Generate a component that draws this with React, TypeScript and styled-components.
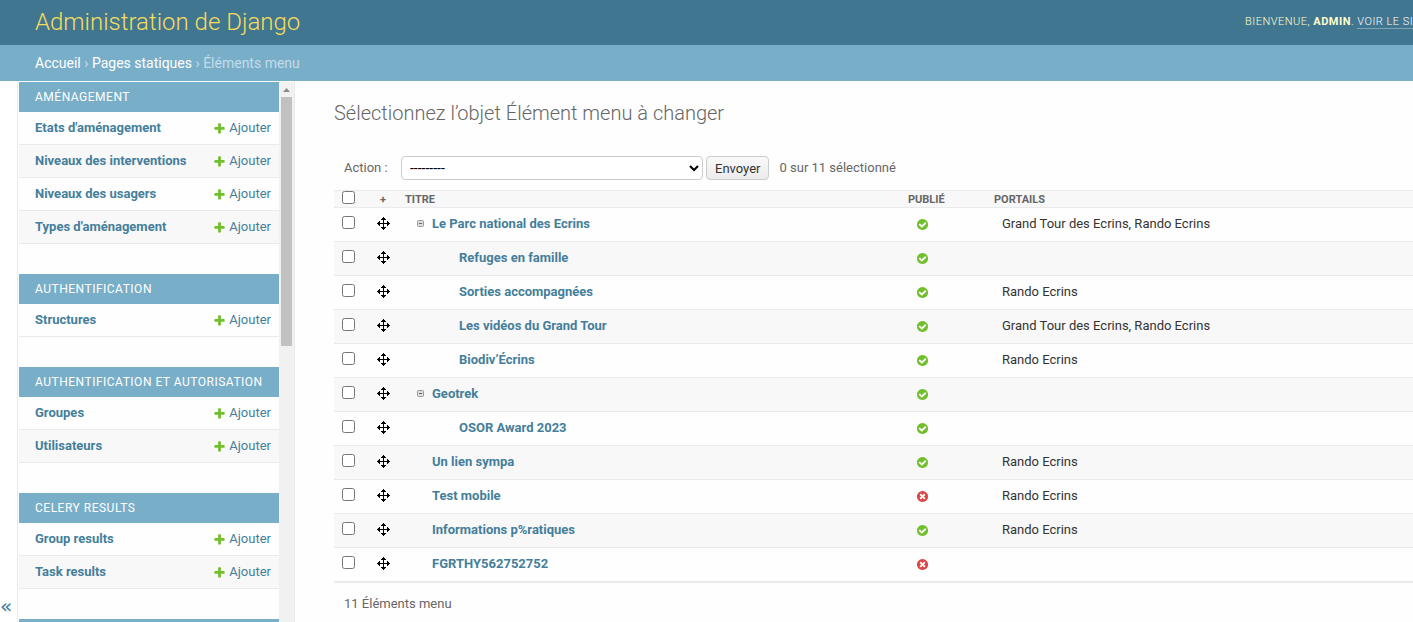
import React from 'react';
import styled, { createGlobalStyle } from 'styled-components';

const GlobalStyle = createGlobalStyle`
  * { box-sizing: border-box; }
  body {
    margin: 0;
    background: #fefefe;
    color: #333;
    font-family: Roboto, "Liberation Sans", sans-serif;
    font-size: 14px;
  }
  a { color: #447e9b; text-decoration: none; }
`;

const Page = styled.div`
  display: flex;
  flex-direction: column;
  height: 100vh;
  overflow: hidden;
`;

const Header = styled.header`
  flex: none;
  display: flex;
  align-items: center;
  height: 45px;
  padding: 0 0 2px 35px;
  background: #417690;
  color: #ffc;
  overflow: hidden;
`;

const SiteName = styled.a`
  flex: 1;
  && { color: #f5dd5d; }
  font-size: 24px;
  font-weight: 300;
  line-height: 28px;
`;

const UserTools = styled.div`
  width: 168px;
  flex: none;
  overflow: hidden;
  white-space: nowrap;
  font-size: 11px;
  font-weight: 300;
  line-height: 16px;
  letter-spacing: 0.045em;
  text-transform: uppercase;
  strong { font-weight: 700; }
  a { color: #fff; border-bottom: 1px solid #7fa3b4; }
`;

const Breadcrumbs = styled.nav`
  flex: none;
  padding: 10px 35px;
  background: #79aec8;
  color: #c4dce8;
  line-height: 16px;
  a { color: #fff; }
`;

const Body = styled.div`
  flex: 1;
  min-height: 0;
  display: flex;
`;

const Toggle = styled.button`
  flex: none;
  align-self: stretch;
  display: flex;
  align-items: flex-end;
  width: 18px;
  padding: 0 0 4px;
  border: 0;
  border-right: 1px solid #eaeaea;
  background: #fff;
  color: #447e9b;
  font-family: "DejaVu Sans", sans-serif;
  font-size: 20px;
  line-height: 24px;
`;

const Sidebar = styled.nav`
  flex: none;
  display: flex;
  width: 277px;
  padding: 1px 0 0 1px;
  border-right: 1px solid #eaeaea;
  overflow: hidden;
`;

const AppList = styled.div`
  width: 260px;
`;

const AppTable = styled.table`
  width: 100%;
  margin-bottom: 30px;
  border-collapse: separate;
  border-spacing: 0;
  font-size: 13px;
  caption {
    height: 30px;
    padding: 0 16px;
    background: #79aec8;
    font-size: 12px;
    line-height: 30px;
    letter-spacing: 0.042em;
    text-align: left;
    text-transform: uppercase;
    white-space: nowrap;
  }
  caption a { color: #fff; }
  tr:nth-child(even) { background: #f8f8f8; }
  th, td {
    height: 33px;
    padding: 0 8px 0 16px;
    border-bottom: 1px solid #eaeaea;
    line-height: 16px;
    text-align: left;
  }
`;

const AddLink = styled.a`
  display: flex;
  align-items: center;
  justify-content: flex-end;
  gap: 3px;
`;

const ScrollTrack = styled.div`
  display: flex;
  flex-direction: column;
  align-items: center;
  width: 15px;
  background: #f1f1f1;
  svg { flex: none; margin: 6px 0 5px; }
`;

const ScrollThumb = styled.div`
  width: 11px;
  height: 249px;
  background: #c1c1c1;
`;

const Main = styled.main`
  flex: 1;
  min-width: 0;
  padding: 20px 0 0 39px;
`;

const Title = styled.h1`
  margin: 0;
  color: #666;
  font-size: 20px;
  font-weight: 300;
  line-height: 24px;
`;

const Actions = styled.form`
  display: flex;
  align-items: center;
  margin-top: 31px;
  padding-left: 10px;
  color: #666;
  font-size: 13px;
  line-height: 24px;
  label { width: 57px; }
`;

const Select = styled.select`
  width: 302px;
  height: 24px;
  padding: 0 4px;
  border: 1px solid #ccc;
  border-radius: 4px;
  background: #fff;
  color: #000;
  font-family: inherit;
  font-size: 14px;
`;

const Submit = styled.button`
  height: 24px;
  margin: 0 10px 0 3px;
  padding: 0 8px;
  border: 1px solid #ccc;
  border-radius: 4px;
  background: linear-gradient(#f9f9f9, #ececec);
  color: #333;
  font-family: inherit;
  font-size: 13px;
`;

const ResultTable = styled.table`
  width: 100%;
  margin-top: 10px;
  table-layout: fixed;
  border-collapse: separate;
  border-spacing: 0;
  border-bottom: 1px solid #eaeaea;
  font-size: 13px;
  th, td { height: 34px; padding: 0 8px; border-bottom: 1px solid #eaeaea; text-align: left; }
  tbody tr:nth-child(even) { background: #f8f8f8; }
  thead th {
    height: 18px;
    padding-top: 1px;
    border-top: 1px solid #eaeaea;
    background: #f8f8f8;
    color: #666;
    font-size: 11px;
    line-height: 15px;
    text-transform: uppercase;
  }
  thead th:first-child { padding-top: 0; }
  thead th:nth-child(2) { padding: 1px 0 0; text-align: center; }
  input { display: block; width: 13px; height: 13px; margin: 0 0 4px; }
  thead input { margin: 0 0 3px; }
  svg { display: block; }
`;

const Col = styled.col<{ $width?: number }>`
  width: ${(p) => (p.$width ? `${p.$width}px` : 'auto')};
`;

const MoveHandle = styled.span`
  display: block;
  padding-bottom: 2px;
  cursor: move;
`;

const Node = styled.div<{ $level: number }>`
  display: flex;
  align-items: center;
  gap: 7px;
  padding: 0 0 2px ${(p) => (p.$level ? 54 : 27)}px;
  &:has(button) { padding-left: 12px; }
`;

const Collapse = styled.button`
  width: 8px;
  height: 8px;
  padding: 0;
  border: 0;
  background: none;
`;

const Indented = styled.div`
  padding: 0 0 2px 8px;
`;

const Status = styled.div`
  padding-left: 8px;
`;

const Paginator = styled.p`
  margin: 0;
  padding: 12px 10px;
  color: #666;
  font-size: 13px;
  line-height: 18px;
`;

const RING =
  'q0 209-103 385.5t-279.5 279.5-385.5 103-385.5-103-279.5-279.5-103-385.5 103-385.5 279.5-279.5 385.5-103 385.5 103 279.5 279.5 103 385.5z';

const PlusIcon = () => (
  <svg width="13" height="13" viewBox="0 0 1792 1792" aria-hidden="true">
    <path fill="#70bf2b" d="M1600 796v192q0 40-28 68t-68 28h-416v416q0 40-28 68t-68 28h-192q-40 0-68-28t-28-68v-416h-416q-40 0-68-28t-28-68v-192q0-40 28-68t68-28h416v-416q0-40 28-68t68-28h192q40 0 68 28t28 68v416h416q40 0 68 28t28 68z" />
  </svg>
);

const YesIcon = () => (
  <svg width="13" height="13" viewBox="0 0 1792 1792" role="img" aria-label="True">
    <path fill="#70bf2b" d={`M1412 734q0-28-18-46l-91-90q-19-19-45-19t-45 19l-408 407-226-226q-19-19-45-19t-45 19l-91 90q-18 18-18 46 0 27 18 45l362 362q19 19 45 19 27 0 46-19l543-543q18-18 18-45zm252 162${RING}`} />
  </svg>
);

const NoIcon = () => (
  <svg width="13" height="13" viewBox="0 0 1792 1792" role="img" aria-label="False">
    <path fill="#dd4646" d={`M1277 1122q0-26-19-45l-181-181 181-181q19-19 19-45 0-27-19-46l-90-90q-19-19-46-19-26 0-45 19l-181 181-181-181q-19-19-45-19-27 0-46 19l-90 90q-19 19-19 46 0 26 19 45l181 181-181 181q-19 19-19 45 0 27 19 46l90 90q19 19 46 19 26 0 45-19l181-181 181 181q19 19 45 19 27 0 46-19l90-90q19-19 19-46zm387-226${RING}`} />
  </svg>
);

const MoveIcon = () => (
  <svg width="13" height="13" viewBox="0 0 13 13" shapeRendering="crispEdges" aria-hidden="true">
    <path d="M6 0h1v13h-1zM0 6h13v1h-13zM5 1h3v1h-3zM4 2h5v1h-5zM5 11h3v1h-3zM4 10h5v1h-5zM1 5h1v3h-1zM2 4h1v5h-1zM11 5h1v3h-1zM10 4h1v5h-1z" />
  </svg>
);

const CollapseIcon = () => (
  <svg width="8" height="8" viewBox="0 0 8 8" aria-hidden="true">
    <rect x="0.5" y="0.5" width="6" height="6" rx="1" fill="#ddd" stroke="#999" />
    <path d="M2 3.5h3" stroke="#666" />
  </svg>
);

const apps = [
  { name: 'Aménagement', models: ["Etats d'aménagement", 'Niveaux des interventions', 'Niveaux des usagers', "Types d'aménagement"] },
  { name: 'Authentification', models: ['Structures'] },
  { name: 'Authentification et autorisation', models: ['Groupes', 'Utilisateurs'] },
  { name: 'Celery Results', models: ['Group results', 'Task results'] },
  { name: '', models: [] },
];

type Item = { title: string; level: number; parent?: boolean; published: boolean; portals: string };

const BOTH = 'Grand Tour des Ecrins, Rando Ecrins';
const RANDO = 'Rando Ecrins';

const items: Item[] = [
  { title: 'Le Parc national des Ecrins', level: 0, parent: true, published: true, portals: BOTH },
  { title: 'Refuges en famille', level: 1, published: true, portals: '' },
  { title: 'Sorties accompagnées', level: 1, published: true, portals: RANDO },
  { title: 'Les vidéos du Grand Tour', level: 1, published: true, portals: BOTH },
  { title: 'Biodiv’Écrins', level: 1, published: true, portals: RANDO },
  { title: 'Geotrek', level: 0, parent: true, published: true, portals: '' },
  { title: 'OSOR Award 2023', level: 1, published: true, portals: '' },
  { title: 'Un lien sympa', level: 0, published: true, portals: RANDO },
  { title: 'Test mobile', level: 0, published: false, portals: RANDO },
  { title: 'Informations p%ratiques', level: 0, published: true, portals: RANDO },
  { title: 'FGRTHY562752752', level: 0, published: false, portals: '' },
];

export default function App() {
  return (
    <Page>
      <GlobalStyle />
      <Header>
        <SiteName href="#">Administration de Django</SiteName>
        <UserTools>
          Bienvenue, <strong>admin</strong>. <a href="#">Voir le site</a>
        </UserTools>
      </Header>
      <Breadcrumbs aria-label="Fil d'Ariane">
        <a href="#">Accueil</a> › <a href="#">Pages statiques</a> › Éléments menu
      </Breadcrumbs>
      <Body>
        <Toggle type="button" aria-label="Basculer la navigation">«</Toggle>
        <Sidebar aria-label="Applications">
          <AppList>
            {apps.map((app) => (
              <AppTable key={app.name}>
                <caption><a href="#">{app.name}</a></caption>
                <tbody>
                  {app.models.map((model) => (
                    <tr key={model}>
                      <th scope="row"><a href="#">{model}</a></th>
                      <td><AddLink href="#"><PlusIcon />Ajouter</AddLink></td>
                    </tr>
                  ))}
                </tbody>
              </AppTable>
            ))}
          </AppList>
          <ScrollTrack>
            <svg width="7" height="4" viewBox="0 0 7 4" aria-hidden="true">
              <path d="M0 4L3.5 0L7 4z" fill="#8a8a8a" />
            </svg>
            <ScrollThumb />
          </ScrollTrack>
        </Sidebar>
        <Main>
          <Title>Sélectionnez l’objet Élément menu à changer</Title>
          <Actions onSubmit={(e) => e.preventDefault()}>
            <label htmlFor="action">Action :</label>
            <Select id="action"><option>---------</option></Select>
            <Submit type="submit">Envoyer</Submit>
            <span>0 sur 11 sélectionné</span>
          </Actions>
          <ResultTable>
            <colgroup>
              <Col $width={35} />
              <Col $width={28} />
              <Col $width={503} />
              <Col $width={86} />
              <Col />
            </colgroup>
            <thead>
              <tr>
                <th scope="col"><input type="checkbox" aria-label="Tout sélectionner" /></th>
                <th scope="col">+</th>
                <th scope="col">Titre</th>
                <th scope="col">Publié</th>
                <th scope="col">Portails</th>
              </tr>
            </thead>
            <tbody>
              {items.map((item) => (
                <tr key={item.title}>
                  <td><input type="checkbox" aria-label={item.title} /></td>
                  <td><MoveHandle><MoveIcon /></MoveHandle></td>
                  <th scope="row">
                    <Node $level={item.level}>
                      {item.parent && <Collapse type="button" aria-label="Replier"><CollapseIcon /></Collapse>}
                      <a href="#">{item.title}</a>
                    </Node>
                  </th>
                  <td><Status>{item.published ? <YesIcon /> : <NoIcon />}</Status></td>
                  <td><Indented>{item.portals}</Indented></td>
                </tr>
              ))}
            </tbody>
          </ResultTable>
          <Paginator>11 Éléments menu</Paginator>
        </Main>
      </Body>
    </Page>
  );
}
